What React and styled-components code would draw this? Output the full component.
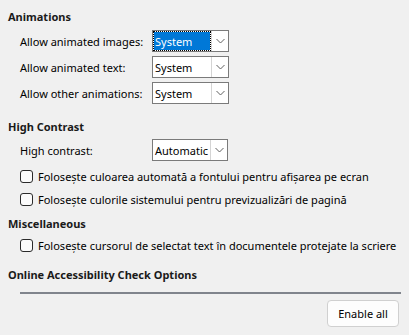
import React from "react";
import styled, { createGlobalStyle } from "styled-components";

const GlobalStyle = createGlobalStyle`
  html, body {
    margin: 0;
    padding: 0;
    background: #f0f0f0;
  }
  body {
    font-family: "Noto Sans", "Open Sans", sans-serif;
    font-size: 11px;
    color: #000000;
  }
`;

const Page = styled.div`
  width: 409px;
  height: 335px;
  box-sizing: border-box;
  padding: 9px 10px 0 8px;
  display: flex;
  flex-direction: column;
  overflow: hidden;
`;

const Section = styled.div`
  display: flex;
  flex-direction: column;
  margin-top: ${(p) => p.top || 0}px;
`;

const Heading = styled.div`
  font-weight: 700;
  height: 16px;
  line-height: 16px;
  color: #1a1a1a;
  margin-bottom: ${(p) => p.gap || 4}px;
`;

const Rows = styled.div`
  display: flex;
  flex-direction: column;
  gap: 4px;
  padding-left: 12px;
`;

const FieldRow = styled.div`
  display: grid;
  grid-template-columns: 132px auto;
  align-items: center;
  height: 22px;
`;

const Label = styled.span`
  white-space: nowrap;
`;

const Combo = styled.div`
  display: flex;
  width: ${(p) => p.width || 77}px;
  height: 22px;
  box-sizing: border-box;
  border: 1px solid #7a7a7a;
  background: #ffffff;
`;

const ComboValue = styled.div`
  flex: 1;
  display: flex;
  align-items: center;
  margin: 1px;
  padding-left: 1px;
  box-sizing: border-box;
  background: ${(p) => (p.selected ? "#0078d7" : "transparent")};
  color: ${(p) => (p.selected ? "#ffffff" : "#000000")};
  outline: ${(p) => (p.selected ? "1px dotted #000000" : "none")};
  white-space: nowrap;
  overflow: hidden;
`;

const ComboButton = styled.div`
  width: 16px;
  display: flex;
  align-items: center;
  justify-content: center;
  border-left: 1px solid #d4d4d4;
  background: #ffffff;
`;

const CheckRow = styled.label`
  display: flex;
  align-items: center;
  gap: 5px;
  height: ${(p) => p.h || 23}px;
  white-space: nowrap;
`;

const Box = styled.span`
  width: 13px;
  height: 13px;
  box-sizing: border-box;
  border: 1px solid #2a2a2a;
  border-radius: 3px;
  background: #fbfbfb;
  flex: none;
`;

const Rule = styled.div`
  height: 2px;
  background: #80848c;
  margin: 5px -2px 6px 12px;
`;

const Footer = styled.div`
  display: flex;
  justify-content: flex-end;
`;

const Button = styled.button`
  width: 72px;
  height: 27px;
  border: 1px solid #d0d0d0;
  border-radius: 4px;
  background: #fdfdfd;
  font-family: inherit;
  font-size: 11px;
  color: #000000;
  padding: 0;
`;

const Chevron = () => (
  <svg width="9" height="6" viewBox="0 0 9 6">
    <polyline points="0.5,1 4.5,5 8.5,1" fill="none" stroke="#606060" strokeWidth="1" />
  </svg>
);

const Select = ({ value, selected, width }) => (
  <Combo width={width}>
    <ComboValue selected={selected}>{value}</ComboValue>
    <ComboButton>
      <Chevron />
    </ComboButton>
  </Combo>
);

const Check = ({ children, h }) => (
  <CheckRow h={h}>
    <Box />
    {children}
  </CheckRow>
);

export default function App() {
  return (
    <>
      <GlobalStyle />
      <Page>
        <Section>
          <Heading gap={5}>Animations</Heading>
          <Rows>
            <FieldRow>
              <Label>Allow animated images:</Label>
              <Select value="System" selected />
            </FieldRow>
            <FieldRow>
              <Label>Allow animated text:</Label>
              <Select value="System" />
            </FieldRow>
            <FieldRow>
              <Label>Allow other animations:</Label>
              <Select value="System" />
            </FieldRow>
          </Rows>
        </Section>

        <Section top={15}>
          <Heading gap={4}>High Contrast</Heading>
          <Rows>
            <FieldRow>
              <Label>High contrast:</Label>
              <Select value="Automatic" width={76} />
            </FieldRow>
            <div>
              <Check>Folosește culoarea automată a fontului pentru afișarea pe ecran</Check>
              <Check>Folosește culorile sistemului pentru previzualizări de pagină</Check>
            </div>
          </Rows>
        </Section>

        <Section top={5}>
          <Heading gap={2}>Miscellaneous</Heading>
          <Rows>
            <Check h={22}>Folosește cursorul de selectat text în documentele protejate la scriere</Check>
          </Rows>
        </Section>

        <Section top={11}>
          <Heading gap={0}>Online Accessibility Check Options</Heading>
          <Rule />
          <Footer>
            <Button>Enable all</Button>
          </Footer>
        </Section>
      </Page>
    </>
  );
}
